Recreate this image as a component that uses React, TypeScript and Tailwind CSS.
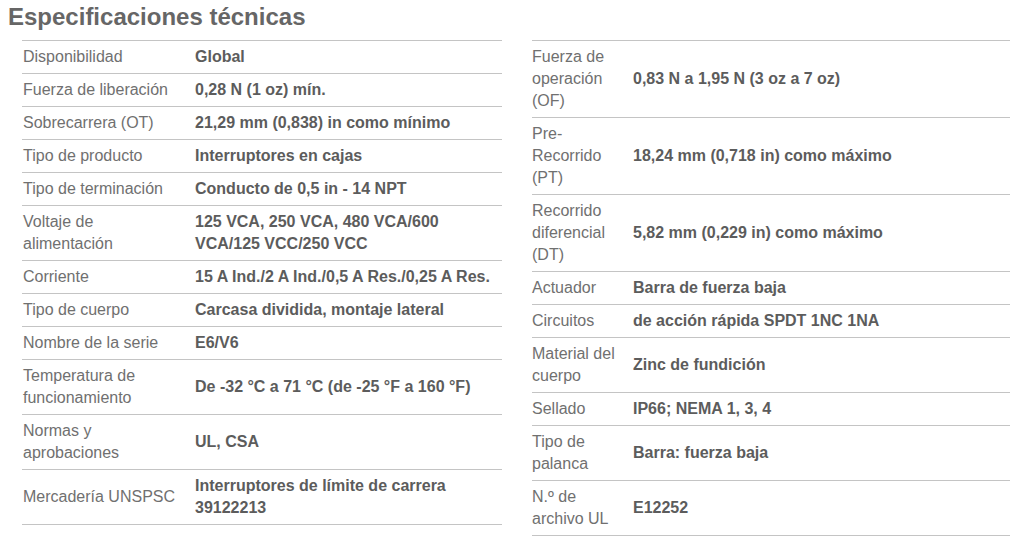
const left: [string, string][] = [
  ['Disponibilidad', 'Global'],
  ['Fuerza de liberación', '0,28 N (1 oz) mín.'],
  ['Sobrecarrera (OT)', '21,29 mm (0,838) in como mínimo'],
  ['Tipo de producto', 'Interruptores en cajas'],
  ['Tipo de terminación', 'Conducto de 0,5 in - 14 NPT'],
  ['Voltaje de alimentación', '125 VCA, 250 VCA, 480 VCA/600 VCA/125 VCC/250 VCC'],
  ['Corriente', '15 A Ind./2 A Ind./0,5 A Res./0,25 A Res.'],
  ['Tipo de cuerpo', 'Carcasa dividida, montaje lateral'],
  ['Nombre de la serie', 'E6/V6'],
  ['Temperatura de funcionamiento', 'De -32 °C a 71 °C (de -25 °F a 160 °F)'],
  ['Normas y aprobaciones', 'UL, CSA'],
  ['Mercadería UNSPSC', 'Interruptores de límite de carrera 39122213'],
];

const right: [string, string][] = [
  ['Fuerza de operación (OF)', '0,83 N a 1,95 N (3 oz a 7 oz)'],
  ['Pre-Recorrido (PT)', '18,24 mm (0,718 in) como máximo'],
  ['Recorrido diferencial (DT)', '5,82 mm (0,229 in) como máximo'],
  ['Actuador', 'Barra de fuerza baja'],
  ['Circuitos', 'de acción rápida SPDT 1NC 1NA'],
  ['Material del cuerpo', 'Zinc de fundición'],
  ['Sellado', 'IP66; NEMA 1, 3, 4'],
  ['Tipo de palanca', 'Barra: fuerza baja'],
  ['N.º de archivo UL', 'E12252'],
];

function SpecTable({ rows, wide }: { rows: [string, string][]; wide: boolean }) {
  return (
    <div className="border-t border-[#c4c4c4]">
      {rows.map(([label, value]) => (
        <div key={label} className="flex items-center border-b border-[#c4c4c4] py-[5px] leading-[22px]">
          <div
            className={
              wide
                ? 'w-[173px] shrink-0 pl-[1px] pr-[12px] text-[#707070]'
                : 'w-[101px] shrink-0 pr-[10px] text-[#707070]'
            }
          >
            {label}
          </div>
          <div className="flex-1 font-bold text-[#5c5c5c]">{value}</div>
        </div>
      ))}
    </div>
  );
}

export default function App() {
  return (
    <div className="bg-white w-[1020px] h-[537px] overflow-hidden px-[8px] text-[16px] [font-family:'Liberation_Sans',Arial,sans-serif]">
      <h2 className="text-[24px] font-bold text-[#666666] leading-[28px] pt-[3px] pb-[9px]">
        Especificaciones técnicas
      </h2>
      <div className="flex gap-[30px] pl-[14px]">
        <div className="w-[480px]">
          <SpecTable rows={left} wide />
        </div>
        <div className="w-[478px]">
          <SpecTable rows={right} wide={false} />
        </div>
      </div>
    </div>
  );
}
